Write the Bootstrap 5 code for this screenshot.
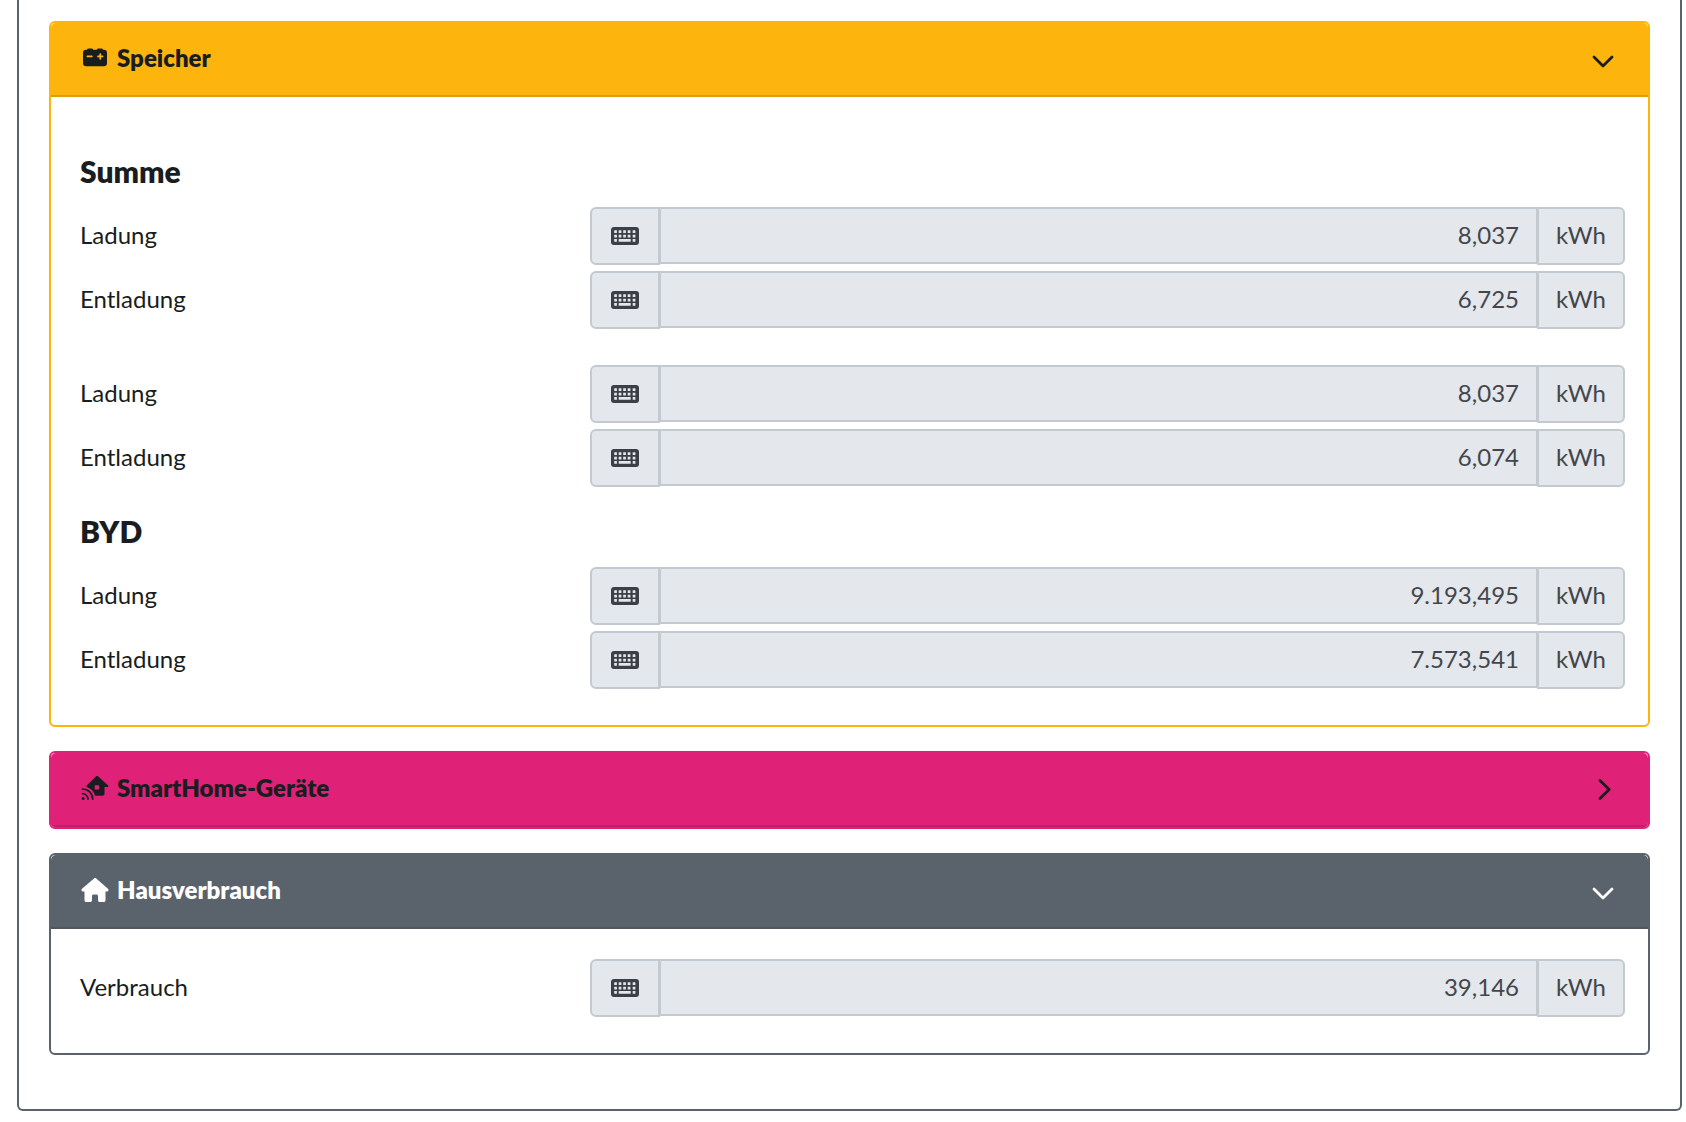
<!DOCTYPE html>
<html lang="de">
<head>
<meta charset="utf-8">
<meta name="viewport" content="width=device-width, initial-scale=1">
<title>Zählerstände</title>
<link href="https://cdn.jsdelivr.net/npm/bootstrap@5.3.0/dist/css/bootstrap.min.css" rel="stylesheet">
<style>
  body { font-family: Lato, "Open Sans", sans-serif; font-size: 24px; line-height: 36px; color: #1a1d20; background: #fff; }
  .outer-frame { margin: 0 4px 11px 17px; padding: 21px 30px 30px; border: 2px solid #5a626b; border-top: 0; border-radius: 0 0 6px 6px; }
  .panel { --tone: #5a626b; --edge: #4f565e; --ink: #1a1d20; border: 2px solid var(--tone); border-radius: 6px; margin-bottom: 24px; color: inherit; }
  .panel-storage { --tone: #fdb50e; --edge: #dd9e0c; }
  .panel-smart { --tone: #e02178; --edge: #c41d69; }
  .panel-house { --ink: #fff; }
  .panel > .card-header { padding: 18px 30px; background: var(--tone); color: var(--ink); border-bottom: 2px solid var(--edge); border-radius: 5px 5px 0 0; }
  .panel-smart > .card-header { border-radius: 5px 5px 4px 4px; }
  .panel-title { font-size: 24px; line-height: 34px; padding-bottom: 2px; font-weight: 800; gap: 8px; }
  .panel-icon { width: 28px; height: 24px; flex: none; }
  .toggle-btn { width: 30px; height: 30px; color: inherit; }
  .toggle-btn svg { display: block; }
  .panel > .card-body { padding: 30px 23px 30px 22px; }
  .group-title { font-size: 30px; line-height: 36px; font-weight: 800; margin: 26px 7px 18px; }
  .group-apart { margin-top: 36px; }
  .meter { margin-bottom: 6px; }
  .meter-label { padding: 0 7px 2px; }
  .meter .input-group-text { height: 58px; padding: 0 18px; border: 2px solid #c2c9d1; border-radius: 6px; background: #e4e7eb; color: #43464b; font-size: 24px; line-height: 36px; justify-content: center; }
  .meter .lead-cell { width: 70px; }
  .meter .unit-cell { width: 88px; padding-bottom: 2px; }
  .meter .form-control { height: 57px; padding: 0 17px 2px; border: 2px solid #c2c9d1; background: #e4e7eb; color: #43464b; font-size: 24px; line-height: 36px; opacity: 1; }
</style>
</head>
<body>
<svg width="0" height="0" class="position-absolute" aria-hidden="true">
  <symbol id="keyboard" viewBox="0 0 28 18">
    <path fill="#3c3f45" fill-rule="evenodd" d="M3 0h22a3 3 0 0 1 3 3v12a3 3 0 0 1-3 3H3a3 3 0 0 1-3-3V3a3 3 0 0 1 3-3z
      M3.2 3.2v2.7h2.7V3.2z M7.7 3.2v2.7h2.7V3.2z M12.2 3.2v2.7h2.7V3.2z M16.7 3.2v2.7h2.7V3.2z M21.7 3.2v2.7h2.7V3.2z
      M3.2 7.7v2.7h2.7V7.7z M7.7 7.7v2.7h2.7V7.7z M12.2 7.7v2.7h2.7V7.7z M16.7 7.7v2.7h2.7V7.7z M21.7 7.7v2.7h2.7V7.7z
      M3.2 12.1v2.7h2.7v-2.7z M7.7 12.1v2.7h12v-2.7z M21.7 12.1v2.7h2.7v-2.7z"/>
  </symbol>
  <symbol id="chevron-down" viewBox="0 0 30 30">
    <path d="M6 13 15 22 24 13" fill="none" stroke="currentColor" stroke-width="2.8" stroke-linecap="round" stroke-linejoin="round"/>
  </symbol>
  <symbol id="chevron-right" viewBox="0 0 30 30">
    <path d="M12 6.5 21.2 15.5 12 24.5" fill="none" stroke="currentColor" stroke-width="2.8" stroke-linecap="round" stroke-linejoin="round"/>
  </symbol>
</svg>

<main class="outer-frame">
  <section class="card panel panel-storage">
    <div class="card-header d-flex justify-content-between align-items-center">
      <h2 class="panel-title d-flex align-items-center mb-0">
        <svg class="panel-icon" viewBox="0 0 27 24" aria-hidden="true"><path fill="currentColor" fill-rule="evenodd" d="M5.5 3.8a1.7 1.7 0 0 1 1.6-1.3h3a1.7 1.7 0 0 1 1.6 1.3h3.6a1.7 1.7 0 0 1 1.6-1.3h3a1.7 1.7 0 0 1 1.6 1.3h.8a3.2 3.2 0 0 1 3.2 3.2v10a3.2 3.2 0 0 1-3.2 3.2H4.700a3.200 3.200 0 0 1-3.200-3.200V7a3.200 3.200 0 0 1 3.200-3.200zM5.900 9.600a.85.85 0 0 0 0 1.700h4.400a.85.85 0 0 0 0-1.700zM17.900 8v1.600h-1.400a.85.85 0 0 0 0 1.700h1.400v1.500a.85.85 0 0 0 1.700 0v-1.500H21a.85.85 0 0 0 0-1.700h-1.400V8A.85.85 0 0 0 17.900 8z"/></svg>
        Speicher
      </h2>
      <button type="button" class="btn toggle-btn border-0 p-0" aria-label="Speicher einklappen" aria-expanded="true"><svg width="30" height="30"><use href="#chevron-down"/></svg></button>
    </div>
    <div class="card-body">
      <h3 class="group-title">Summe</h3>
      <div class="row g-0 meter">
        <label class="col-4 meter-label d-flex align-items-center" for="sum-in">Ladung</label>
        <div class="col-8"><div class="input-group align-items-start">
          <span class="input-group-text lead-cell"><svg width="28" height="18" aria-hidden="true"><use href="#keyboard"/></svg></span>
          <input id="sum-in" type="text" class="form-control text-end" value="8,037" disabled>
          <span class="input-group-text unit-cell">kWh</span>
        </div></div>
      </div>
      <div class="row g-0 meter">
        <label class="col-4 meter-label d-flex align-items-center" for="sum-out">Entladung</label>
        <div class="col-8"><div class="input-group align-items-start">
          <span class="input-group-text lead-cell"><svg width="28" height="18" aria-hidden="true"><use href="#keyboard"/></svg></span>
          <input id="sum-out" type="text" class="form-control text-end" value="6,725" disabled>
          <span class="input-group-text unit-cell">kWh</span>
        </div></div>
      </div>
      <div class="row g-0 meter group-apart">
        <label class="col-4 meter-label d-flex align-items-center" for="bat-in">Ladung</label>
        <div class="col-8"><div class="input-group align-items-start">
          <span class="input-group-text lead-cell"><svg width="28" height="18" aria-hidden="true"><use href="#keyboard"/></svg></span>
          <input id="bat-in" type="text" class="form-control text-end" value="8,037" disabled>
          <span class="input-group-text unit-cell">kWh</span>
        </div></div>
      </div>
      <div class="row g-0 meter">
        <label class="col-4 meter-label d-flex align-items-center" for="bat-out">Entladung</label>
        <div class="col-8"><div class="input-group align-items-start">
          <span class="input-group-text lead-cell"><svg width="28" height="18" aria-hidden="true"><use href="#keyboard"/></svg></span>
          <input id="bat-out" type="text" class="form-control text-end" value="6,074" disabled>
          <span class="input-group-text unit-cell">kWh</span>
        </div></div>
      </div>
      <h3 class="group-title">BYD</h3>
      <div class="row g-0 meter">
        <label class="col-4 meter-label d-flex align-items-center" for="byd-in">Ladung</label>
        <div class="col-8"><div class="input-group align-items-start">
          <span class="input-group-text lead-cell"><svg width="28" height="18" aria-hidden="true"><use href="#keyboard"/></svg></span>
          <input id="byd-in" type="text" class="form-control text-end" value="9.193,495" disabled>
          <span class="input-group-text unit-cell">kWh</span>
        </div></div>
      </div>
      <div class="row g-0 meter">
        <label class="col-4 meter-label d-flex align-items-center" for="byd-out">Entladung</label>
        <div class="col-8"><div class="input-group align-items-start">
          <span class="input-group-text lead-cell"><svg width="28" height="18" aria-hidden="true"><use href="#keyboard"/></svg></span>
          <input id="byd-out" type="text" class="form-control text-end" value="7.573,541" disabled>
          <span class="input-group-text unit-cell">kWh</span>
        </div></div>
      </div>
    </div>
  </section>

  <section class="card panel panel-smart">
    <div class="card-header d-flex justify-content-between align-items-center">
      <h2 class="panel-title d-flex align-items-center mb-0">
        <svg class="panel-icon" viewBox="0 0 27 24" aria-hidden="true">
          <path fill="currentColor" fill-rule="evenodd" d="M14.600.3a1.400 1.400 0 0 1 1.900 0l10.100 9.100c.6.600.300 1.600-.600 1.600H23v7a1.800 1.800 0 0 1-1.800 1.800h-7.500C12.500 15.500 9.600 12.300 5.400 10.900c-.600-.2-.700-1-.2-1.500zM13.800 9.300a.6.6 0 0 0-.6.600v3a.6.6 0 0 0 .6.600h3.200a.6.6 0 0 0 .6-.6v-3a.6.6 0 0 0-.6-.6z"/>
          <circle cx="1.600" cy="22.400" r="1.500" fill="currentColor"/>
          <path d="M1 17.600A5.600 5.600 0 0 1 6.500 23.100M1 13A10.200 10.200 0 0 1 11.200 23.100" fill="none" stroke="currentColor" stroke-width="1.700" stroke-linecap="round"/>
        </svg>
        SmartHome-Geräte
      </h2>
      <button type="button" class="btn toggle-btn border-0 p-0" aria-label="SmartHome-Geräte ausklappen" aria-expanded="false"><svg width="30" height="30"><use href="#chevron-right"/></svg></button>
    </div>
  </section>

  <section class="card panel panel-house">
    <div class="card-header d-flex justify-content-between align-items-center">
      <h2 class="panel-title d-flex align-items-center mb-0">
        <svg class="panel-icon" viewBox="0 0 576 512" aria-hidden="true"><path fill="currentColor" d="M575.8 255.500c0 18-15 32.100-32 32.100h-32l.7 160.200c0 2.700-.2 5.400-.5 8.100V472c0 22.100-17.900 40-40 40H392c-22.100 0-40-17.900-40-40V384c0-17.700-14.300-32-32-32H256c-17.700 0-32 14.300-32 32v88c0 22.100-17.900 40-40 40H104c-22.100 0-40-17.900-40-40V287.600H32c-18 0-32-14-32-32.100c0-9 3-17 10-24L266.400 8c7-7 15-8 22-8s15 2 21 7L564.800 231.500c8 7 12 15 11 24z"/></svg>
        Hausverbrauch
      </h2>
      <button type="button" class="btn toggle-btn border-0 p-0" aria-label="Hausverbrauch einklappen" aria-expanded="true"><svg width="30" height="30"><use href="#chevron-down"/></svg></button>
    </div>
    <div class="card-body">
      <div class="row g-0 meter">
        <label class="col-4 meter-label d-flex align-items-center" for="house-use">Verbrauch</label>
        <div class="col-8"><div class="input-group align-items-start">
          <span class="input-group-text lead-cell"><svg width="28" height="18" aria-hidden="true"><use href="#keyboard"/></svg></span>
          <input id="house-use" type="text" class="form-control text-end" value="39,146" disabled>
          <span class="input-group-text unit-cell">kWh</span>
        </div></div>
      </div>
    </div>
  </section>
</main>
<script src="https://cdn.jsdelivr.net/npm/bootstrap@5.3.0/dist/js/bootstrap.bundle.min.js"></script>
</body>
</html>
